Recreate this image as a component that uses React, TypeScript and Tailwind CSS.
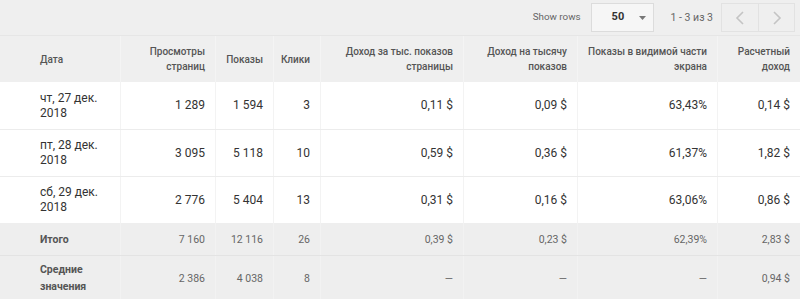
import React from "react";

const cols = "grid grid-cols-[120px_95px_58px_47px_143px_114px_140px_83px]";

const headerLines: string[][] = [
  ["Дата"],
  ["Просмотры", "страниц"],
  ["Показы"],
  ["Клики"],
  ["Доход за тыс. показов", "страницы"],
  ["Доход на тысячу", "показов"],
  ["Показы в видимой части", "экрана"],
  ["Расчетный", "доход"],
];

const S = "\u00a0";

const rows: string[][] = [
  ["чт, 27 дек.|2018", `1${S}289`, `1${S}594`, "3", "0,11 $", "0,09 $", "63,43%", "0,14 $"],
  ["пт, 28 дек.|2018", `3${S}095`, `5${S}118`, "10", "0,59 $", "0,36 $", "61,37%", "1,82 $"],
  ["сб, 29 дек.|2018", `2${S}776`, `5${S}404`, "13", "0,31 $", "0,16 $", "63,06%", "0,86 $"],
];

const totals: string[][] = [
  ["Итого", `7${S}160`, `12${S}116`, "26", "0,39 $", "0,23 $", "62,39%", "2,83 $"],
  ["Средние|значения", `2${S}386`, `4${S}038`, "8", "—", "—", "—", "0,94 $"],
];

function Lines({ text }: { text: string }) {
  return (
    <>
      {text.split("|").map((t, i) => (
        <div key={i} className="whitespace-nowrap">
          {t}
        </div>
      ))}
    </>
  );
}

export default function App() {
  return (
    <div
      className="w-[800px] h-[299px] overflow-hidden bg-[#efefef]"
      style={{ fontFamily: "Roboto, 'Noto Sans', sans-serif" }}
    >
      {/* toolbar */}
      <div className="h-[35px] flex items-center justify-end pr-[5px] text-[10.5px] text-[#666]">
        <span className="mr-[10px] text-[9.8px]">Show rows</span>
        <div className="w-[63px] h-[29px] border border-[#dcdcdc] bg-[#f6f6f6] flex items-center pl-[20px] pr-[7px] mr-[17px]">
          <span className="font-bold text-[#333] text-[11px]">50</span>
          <svg className="ml-auto" width="7" height="4" viewBox="0 0 7 4">
            <path d="M0 0h7L3.5 4z" fill="#777" />
          </svg>
        </div>
        <span className="mr-[8px] text-[#666]">1 - 3 из 3</span>
        <div className="flex h-[29px] border border-[#e2e2e2]">
          <div className="w-[37px] flex items-center justify-center border-r border-[#e2e2e2]">
            <svg width="10" height="14" viewBox="0 0 10 14">
              <path d="M8 1L2 7l6 6" stroke="#c4c4c4" strokeWidth="1.6" fill="none" />
            </svg>
          </div>
          <div className="w-[35px] flex items-center justify-center">
            <svg width="10" height="14" viewBox="0 0 10 14">
              <path d="M2 1l6 6-6 6" stroke="#c4c4c4" strokeWidth="1.6" fill="none" />
            </svg>
          </div>
        </div>
      </div>

      {/* header */}
      <div className={`${cols} h-[47px] border-t border-[#e6e6e6] text-[10px] font-medium text-[#555] leading-[15px]`}>
        {headerLines.map((h, i) => (
          <div
            key={i}
            className={`flex flex-col justify-center ${
              i === 0 ? "pl-[40px] items-start" : "pr-[10px] items-end text-right border-l border-[#f4f4f4]"
            }`}
          >
            {h.map((l, j) => (
              <div key={j} className="whitespace-nowrap">
                {l}
              </div>
            ))}
          </div>
        ))}
      </div>

      {/* data rows */}
      {rows.map((r, ri) => (
        <div
          key={ri}
          className={`${cols} h-[47px] bg-white text-[12px] text-[#333] leading-[15px] ${
            ri > 0 ? "border-t border-[#ececec]" : ""
          }`}
        >
          {r.map((c, ci) => (
            <div
              key={ci}
              className={`flex flex-col justify-center ${
                ci === 0 ? "pl-[40px] items-start" : "pr-[10px] items-end border-l border-[#f3f3f3]"
              }`}
            >
              <Lines text={c} />
            </div>
          ))}
        </div>
      ))}

      {/* totals */}
      {totals.map((r, ri) => (
        <div
          key={ri}
          className={`${cols} ${ri === 0 ? "h-[32px]" : "h-[45px] border-t border-[#e3e3e3]"} bg-[#eeeeee] text-[10.5px] text-[#666] leading-[17px]`}
        >
          {r.map((c, ci) => (
            <div
              key={ci}
              className={`flex flex-col justify-center ${
                ci === 0 ? "pl-[40px] items-start font-bold text-[#555]" : "pr-[10px] items-end border-l border-[#f2f2f2]"
              }`}
            >
              <Lines text={c} />
            </div>
          ))}
        </div>
      ))}
    </div>
  );
}
